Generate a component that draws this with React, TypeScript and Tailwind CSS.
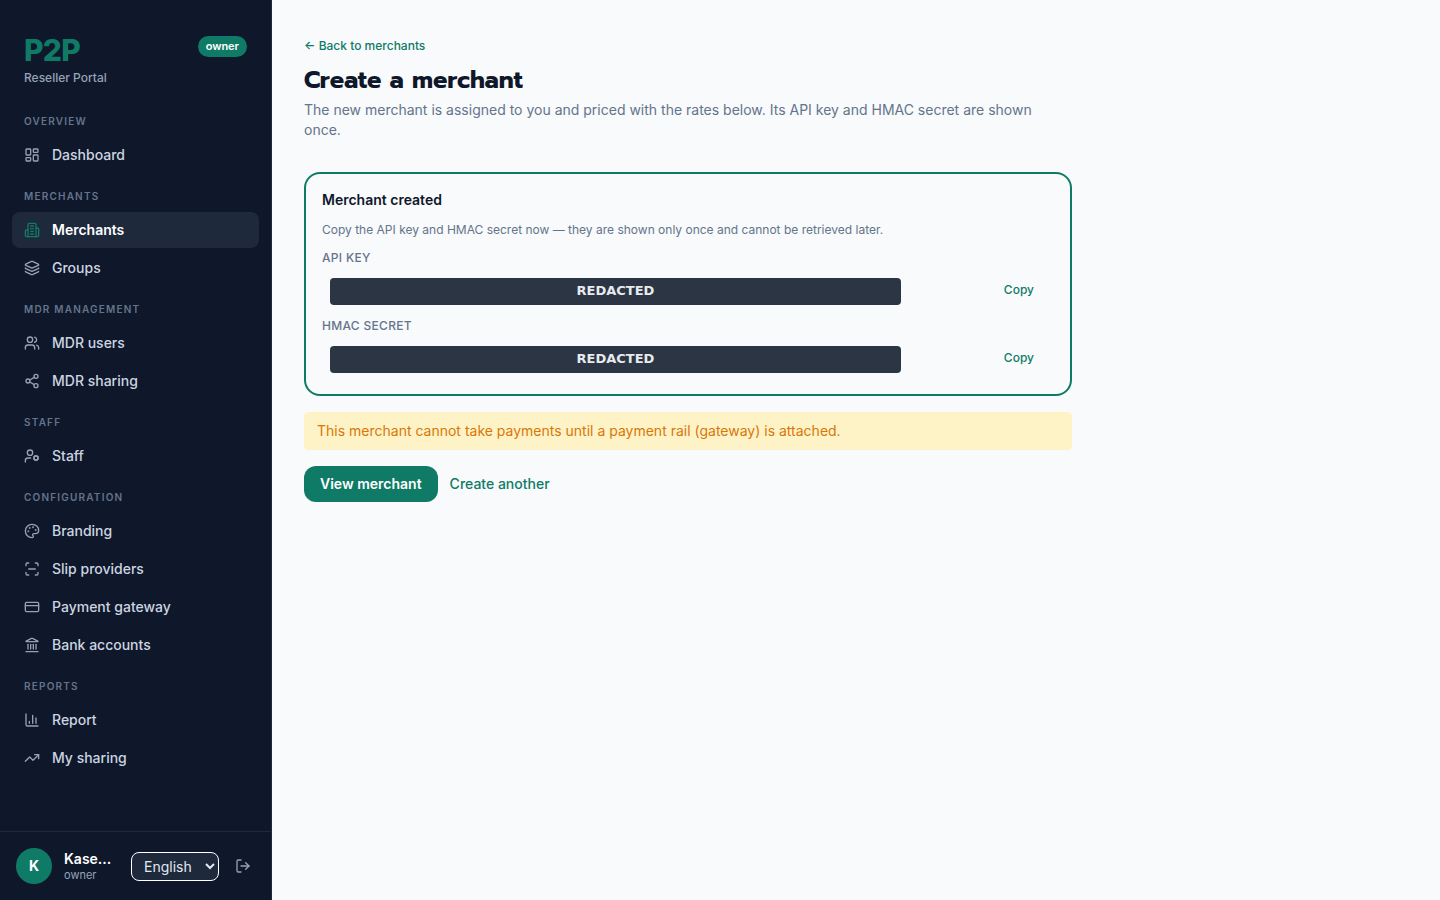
import { type ReactNode } from "react";
import {
  LayoutDashboard, Layers, Users, Share2, Palette, CreditCard,
  Landmark, TrendingUp, LogOut, type LucideIcon,
} from "lucide-react";

function Glyph({ children }: { children: ReactNode }) {
  return (
    <svg viewBox="0 0 24 24" fill="none" stroke="currentColor" strokeWidth="2" strokeLinecap="round" strokeLinejoin="round" className="size-4 shrink-0" aria-hidden="true">
      {children}
    </svg>
  );
}

const icon = (Icon: LucideIcon) => <Icon className="size-4 shrink-0" aria-hidden="true" />;

const merchantsIcon = (
  <Glyph>
    <path d="M6 22V4a2 2 0 0 1 2-2h8a2 2 0 0 1 2 2v18Z" />
    <path d="M6 12H4a2 2 0 0 0-2 2v6a2 2 0 0 0 2 2h2" />
    <path d="M18 9h2a2 2 0 0 1 2 2v9a2 2 0 0 1-2 2h-2" />
    <path d="M10 6h4M10 10h4M10 14h4M10 18h4" />
  </Glyph>
);

const staffIcon = (
  <Glyph>
    <circle cx="9" cy="7" r="4" />
    <path d="M10 15H6a4 4 0 0 0-4 4v2" />
    <circle cx="18" cy="15" r="3" />
    <path d="m21.7 16.4-.9-.3M15.2 13.9l-.9-.3M16.6 18.7l.3-.9M19.1 12.2l.3-.9M19.6 18.7l-.4-1M16.8 12.3l-.4-1M14.3 16.6l1-.4M20.7 13.8l1-.4" />
  </Glyph>
);

const slipIcon = (
  <Glyph>
    <path d="M3 7V5a2 2 0 0 1 2-2h2M17 3h2a2 2 0 0 1 2 2v2M21 17v2a2 2 0 0 1-2 2h-2M7 21H5a2 2 0 0 1-2-2v-2M7 12h10" />
  </Glyph>
);

const reportIcon = (
  <Glyph>
    <path d="M3 3v16a2 2 0 0 0 2 2h16M18 17V9M13 17V5M8 17v-3" />
  </Glyph>
);

type Item = { label: string; icon: ReactNode; active?: boolean };

const sections: { title: string; items: Item[] }[] = [
  { title: "OVERVIEW", items: [{ label: "Dashboard", icon: icon(LayoutDashboard) }] },
  {
    title: "MERCHANTS",
    items: [
      { label: "Merchants", icon: merchantsIcon, active: true },
      { label: "Groups", icon: icon(Layers) },
    ],
  },
  {
    title: "MDR MANAGEMENT",
    items: [
      { label: "MDR users", icon: icon(Users) },
      { label: "MDR sharing", icon: icon(Share2) },
    ],
  },
  { title: "STAFF", items: [{ label: "Staff", icon: staffIcon }] },
  {
    title: "CONFIGURATION",
    items: [
      { label: "Branding", icon: icon(Palette) },
      { label: "Slip providers", icon: slipIcon },
      { label: "Payment gateway", icon: icon(CreditCard) },
      { label: "Bank accounts", icon: icon(Landmark) },
    ],
  },
  {
    title: "REPORTS",
    items: [
      { label: "Report", icon: reportIcon },
      { label: "My sharing", icon: icon(TrendingUp) },
    ],
  },
];

function Sidebar() {
  return (
    <aside className="sticky top-0 flex h-screen w-68 shrink-0 flex-col border-r border-[#1e293b] bg-[#0f172a]">
      <header className="flex items-start justify-between px-6 pt-8 pb-7">
        <div>
          <div className="text-3xl leading-9 font-extrabold tracking-tight text-[#0f7b66]">P2P</div>
          <div className="mt-0.5 text-xs font-medium text-[#94a3b8]">Reseller Portal</div>
        </div>
        <span className="mt-1 rounded-full bg-[#0f7b66] px-2 text-[11px] leading-[21px] font-semibold text-white">owner</span>
      </header>
      <nav className="flex flex-1 flex-col gap-4 overflow-y-auto px-3">
        {sections.map((section) => (
          <section key={section.title}>
            <h2 className="mb-2 px-3 text-[10px] leading-[15px] font-semibold tracking-[1.2px] text-[#64748b]">{section.title}</h2>
            <ul className="flex flex-col gap-0.5">
              {section.items.map((item) => (
                <li key={item.label}>
                  <a
                    href="#"
                    aria-current={item.active ? "page" : undefined}
                    className={
                      item.active
                        ? "flex h-9 items-center gap-3 rounded-lg bg-[#1e293b] px-3 text-sm font-semibold text-white"
                        : "flex h-9 items-center gap-3 rounded-lg px-3 text-sm font-medium text-[#cbd5e1]"
                    }
                  >
                    <span className={item.active ? "text-[#0f7b66]" : "text-[#94a3b8]"}>{item.icon}</span>
                    {item.label}
                  </a>
                </li>
              ))}
            </ul>
          </section>
        ))}
      </nav>
      <footer className="flex items-center gap-3 border-t border-[#1e293b] p-4">
        <div className="flex size-9 shrink-0 items-center justify-center rounded-full bg-[#0f7b66] text-sm font-bold text-white">K</div>
        <div className="min-w-0 flex-1">
          <div className="text-sm leading-[18px] font-semibold text-white">Kase...</div>
          <div className="text-[11px] leading-[14px] text-[#94a3b8]">owner</div>
        </div>
        <select aria-label="Language" className="h-[29px] w-[88px] shrink-0 rounded-lg border border-white bg-[#1e293b] px-2 text-sm text-[#e2e8f0]">
          <option>English</option>
        </select>
        <button type="button" aria-label="Sign out" className="p-1 text-[#94a3b8]">{icon(LogOut)}</button>
      </footer>
    </aside>
  );
}

function SecretField({ label }: { label: string }) {
  return (
    <div className="pt-3 pb-px">
      <div className="text-xs font-medium tracking-[0.3px] text-[#64748b]">{label}</div>
      <div className="mt-3 flex items-start justify-between gap-4 pr-5 pl-2">
        <code className="max-w-[571px] flex-1 rounded bg-[#2b3544] pb-0.5 text-center font-['DejaVu_Sans',sans-serif] text-[13px] leading-[25px] font-bold text-[#e8eaed]">REDACTED</code>
        <button type="button" aria-label={`Copy ${label}`} className="text-xs leading-6 font-medium text-[#0f7b66]">Copy</button>
      </div>
    </div>
  );
}

export default function App() {
  return (
    <div className="flex min-h-screen bg-[#f8fafc] font-['Inter','Liberation_Sans',sans-serif] text-[#0f172a]">
      <Sidebar />
      <main className="min-w-0 flex-1 px-8 pt-[38px] pb-8">
        <div className="max-w-3xl">
          <a href="#" className="block text-xs font-medium text-[#0f7b66]">← Back to merchants</a>
          <h1 className="mt-2.5 font-['Prompt','Inter',sans-serif] text-2xl leading-8 font-bold">Create a merchant</h1>
          <p className="mt-1 text-sm text-[#64748b]">The new merchant is assigned to you and priced with the rates below. Its API key and HMAC secret are shown once.</p>
          <section className="mt-8 rounded-2xl border-2 border-[#0f7b66] px-4 pt-4 pb-5">
            <h2 className="text-sm font-semibold">Merchant created</h2>
            <p className="mt-3 text-xs text-[#64748b]">Copy the API key and HMAC secret now — they are shown only once and cannot be retrieved later.</p>
            <SecretField label="API KEY" />
            <SecretField label="HMAC SECRET" />
          </section>
          <p role="status" className="mt-4 rounded border border-[#fef3c7] bg-[#fef3c7] px-3 py-2 text-sm text-[#d97706]">This merchant cannot take payments until a payment rail (gateway) is attached.</p>
          <div className="mt-4 flex items-center gap-3">
            <a href="#" className="flex h-9 items-center rounded-xl bg-[#0f7b66] px-4 text-sm font-semibold text-white">View merchant</a>
            <button type="button" className="text-sm font-medium text-[#0f7b66]">Create another</button>
          </div>
        </div>
      </main>
    </div>
  );
}
